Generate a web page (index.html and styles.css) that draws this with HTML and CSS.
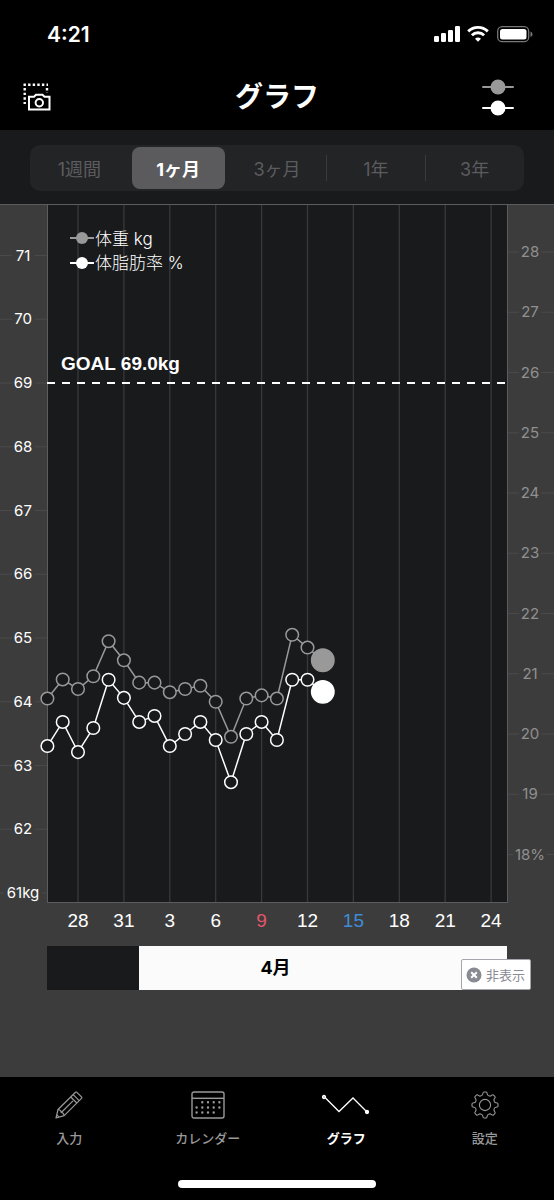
FILE: index.html
```html
<!DOCTYPE html>
<html lang="ja">
<head>
    <meta charset="UTF-8">
    <meta name="viewport" content="width=device-width, initial-scale=1.0">
    <title>グラフ</title>
    <link rel="stylesheet" href="styles.css">
</head>
<body>
    <div class="status-bar">
        <span class="clock">4:21</span>
        <svg class="status-icons" width="100" height="20" viewBox="0 0 100 20" aria-hidden="true">
            <g fill="#fff">
                <rect x="0" y="12" width="5" height="6" rx="1.2"/>
                <rect x="7" y="9" width="5" height="9" rx="1.2"/>
                <rect x="14" y="6" width="5" height="12" rx="1.2"/>
                <rect x="21" y="2" width="5" height="16" rx="1.2"/>
                <path d="M44 17.8l-3-3a4.4 4.4 0 0 1 6 0z"/>
            </g>
            <g fill="none" stroke="#fff" stroke-width="2.9">
                <path d="M34.2 7.4a14 14 0 0 1 19.6 0"/>
                <path d="M37.9 11.3a8.7 8.7 0 0 1 12.2 0"/>
            </g>
            <rect x="63.7" y="2.7" width="31" height="15" rx="4.5" fill="none" stroke="#777" stroke-width="1.3"/>
            <rect x="66" y="5" width="26.5" height="10.5" rx="2.5" fill="#fff"/>
            <path d="M96.500 7.500q2 .7 2 2.700t-2 2.700z" fill="#777"/>
        </svg>
    </div>

    <header class="header">
        <button class="icon-button" aria-label="スクリーンショット">
            <svg width="30" height="30" viewBox="0 0 30 30" fill="none" stroke="#fff">
                <path d="M1.500 2.700H26" stroke-width="2.400" stroke-dasharray="2.400 2.200"/>
                <path d="M2.700 6.100V22M25 6.100V11" stroke-width="2.400" stroke-dasharray="2.400 2.200"/>
                <path d="M7 14.800h5l2-2h6.500l2 2h5v12.700H7z" stroke-width="2"/>
                <circle cx="17.300" cy="20.700" r="3.700" stroke-width="2"/>
            </svg>
        </button>
        <h1>グラフ</h1>
        <button class="icon-button" aria-label="表示項目">
            <svg width="32" height="38" viewBox="0 0 32 38">
                <path d="M1 9h30" stroke="#999" stroke-width="2" stroke-linecap="round"/>
                <circle cx="16" cy="9" r="7.500" fill="#999"/>
                <path d="M1 30h30" stroke="#fff" stroke-width="2" stroke-linecap="round"/>
                <circle cx="16" cy="30" r="7.500" fill="#fff"/>
            </svg>
        </button>
    </header>

    <div class="period">
        <div class="segments">
            <button>1週間</button>
            <button class="selected">1ヶ月</button>
            <button>3ヶ月</button>
            <button class="divided">1年</button>
            <button class="divided">3年</button>
        </div>
    </div>

    <main class="graph">
        <svg class="chart" id="chart" viewBox="0 0 554 742" role="img" aria-label="体重と体脂肪率のグラフ">
            <rect class="plot" x="47" y="0" width="460" height="698"/>
            <g id="grid"></g>
            <path class="frame" d="M0 .5H554M47.500 1V698.500H507.500V1"/>
            <path class="goal" d="M47 179H507"/>
            <text class="goal-label" x="61" y="166">GOAL 69.0kg</text>
            <g id="series"></g>
            <path d="M70 34h24" stroke="#999" stroke-width="2"/>
            <circle cx="82" cy="34" r="6" fill="#999"/>
            <text class="legend" x="95" y="41">体重 kg</text>
            <path d="M70 59h24" stroke="#fff" stroke-width="2"/>
            <circle cx="82" cy="59" r="6" fill="#fff"/>
            <text class="legend" x="95" y="65">体脂肪率 %</text>
        </svg>
        <div class="months">
            <div class="month previous"></div>
            <div class="month current">4月</div>
            <button class="hide-ad">
                <svg width="16" height="16" viewBox="0 0 16 16" aria-hidden="true">
                    <circle cx="8" cy="8" r="7.500" fill="#8a8a93"/>
                    <path d="M5.200 5.200l5.600 5.600M10.800 5.200l-5.600 5.600" stroke="#fff" stroke-width="2"/>
                </svg>
                非表示
            </button>
        </div>
    </main>

    <footer class="footer">
        <nav class="tabs">
            <a href="#input">
                <svg width="28" height="28" viewBox="0 0 28 28" fill="none" stroke="#999" stroke-width="1.2" stroke-linejoin="round">
                    <path d="M1 27l2-8.500L20.500 1.300q.7-.6 1.400 0l4.600 4.600q.7.700 0 1.400L9.200 24.700z"/>
                    <path d="M3 18.500q3.200.6 3.300 3 2.500.1 2.900 3.200M6.300 21.500L18 9.800M15.800 6l6 6M18.200 3.700l6 6M1.800 23.800l2.300 2.300"/>
                </svg>
                入力
            </a>
            <a href="#calendar">
                <svg width="34" height="28" viewBox="0 0 34 28" fill="none" stroke="#999">
                    <rect x="1" y="1" width="32" height="26" rx="2" stroke-width="1.4"/>
                    <path d="M1 7.300h32" stroke-width="1.4"/>
                    <g stroke-width="2.4" stroke-linecap="round" stroke-dasharray="0 5.7">
                        <path d="M11.300 11.300H28.500"/>
                        <path d="M5.600 16.500H28.500"/>
                        <path d="M5.600 21.500H23"/>
                    </g>
                </svg>
                カレンダー
            </a>
            <a href="#graph" class="active">
                <svg width="48" height="28" viewBox="0 0 48 28" fill="none" stroke="#fff" stroke-width="1.3">
                    <path d="M2.500 6L17 20.500 31 7l14 14"/>
                    <circle cx="2" cy="6" r="1.500" fill="#aaa"/>
                    <circle cx="45" cy="21" r="1.500" fill="#fff"/>
                </svg>
                グラフ
            </a>
            <a href="#settings">
                <svg width="28" height="28" viewBox="-14 -14 28 28" fill="none" stroke="#999" stroke-width="1.1">
                    <circle r="5.600"/>
                    <path id="tooth" d="M-3.800-9.200Q-2.300-9.800-2.200-11-2-13-1.200-13H1.200Q2-13 2.200-11 2.300-9.800 3.800-9.200"/>
                    <use href="#tooth" transform="rotate(45)"/>
                    <use href="#tooth" transform="rotate(90)"/>
                    <use href="#tooth" transform="rotate(135)"/>
                    <use href="#tooth" transform="rotate(180)"/>
                    <use href="#tooth" transform="rotate(225)"/>
                    <use href="#tooth" transform="rotate(270)"/>
                    <use href="#tooth" transform="rotate(315)"/>
                </svg>
                設定
            </a>
        </nav>
        <div class="home-indicator"></div>
    </footer>

    <script src="chart.js"></script>
</body>
</html>
```
FILE: styles.css
```css
* {
    box-sizing: border-box;
}
body {
    margin: 0;
    min-height: 100vh;
    display: flex;
    flex-direction: column;
    background-color: #000;
    color: #fff;
    font-family: Inter, "Noto Sans CJK JP", sans-serif;
}
button {
    margin: 0;
    padding: 0;
    border: none;
    background: none;
    color: inherit;
    font-family: inherit;
    cursor: pointer;
}
svg {
    display: block;
}
.status-bar {
    display: flex;
    justify-content: space-between;
    align-items: center;
    height: 68px;
    padding: 0 20px 0 47px;
}
.clock {
    font-size: 21px;
    font-weight: 600;
}
.header {
    display: grid;
    grid-template-columns: 1fr auto 1fr;
    align-items: center;
    height: 62px;
    padding-bottom: 4px;
}
.header h1 {
    margin: 0;
    font-size: 28px;
    line-height: 40px;
    font-weight: 700;
}
.icon-button {
    justify-self: start;
    margin-left: 22px;
}
.icon-button:last-child {
    justify-self: end;
    margin: 0 40px 0 0;
}
.period {
    padding: 15px 30px 13px;
    background-color: #191a1c;
}
.segments {
    display: grid;
    grid-template-columns: repeat(5, 1fr);
    height: 46px;
    padding: 2px 0;
    border-radius: 10px;
    background-color: #232426;
}
.segments button {
    position: relative;
    border-radius: 8px;
    color: #5c5c5f;
    font-size: 18px;
}
.segments .selected {
    margin: 0 3px;
    background-color: #5b5a5d;
    color: #fff;
    font-weight: 700;
}
.segments .divided::before {
    content: "";
    position: absolute;
    left: 0;
    top: 8px;
    bottom: 8px;
    width: 1px;
    background-color: #3a3a3d;
}
.graph {
    flex: 1;
    background-color: #3c3c3c;
}
.chart {
    width: 100%;
    height: auto;
}
.chart text {
    fill: #fff;
}
.plot {
    fill: #191a1c;
}
.frame {
    fill: none;
    stroke: #5c5c5e;
}
.line-x {
    stroke: #38393b;
    stroke-width: 1.3;
}
.line-y {
    stroke: #4a4a4c;
}
.goal {
    stroke: #fff;
    stroke-width: 2;
    stroke-dasharray: 8 7;
}
.chart .goal-label {
    font-family: "Liberation Sans", Arial, sans-serif;
    font-size: 19px;
    font-weight: 700;
}
.legend {
    font-size: 17px;
    font-weight: 300;
}
.scale {
    font-size: 15px;
    text-anchor: middle;
}
.chart .fat-scale {
    fill: #909090;
}
.day {
    font-family: "Liberation Sans", Arial, sans-serif;
    font-size: 19px;
    text-anchor: middle;
}
.chart .sunday {
    fill: #e2566b;
}
.chart .saturday {
    fill: #3f8cd8;
}
.weight {
    stroke: #999;
}
.fat {
    stroke: #fff;
}
.weight, .fat {
    stroke-width: 1.5;
    fill: #191a1c;
}
.series-line {
    fill: none;
}
.weight .latest {
    fill: #999;
}
.fat .latest {
    fill: #fff;
}
.months {
    position: relative;
    display: grid;
    grid-template-columns: 1fr 4fr;
    height: 44px;
    margin: 0 8.5%;
}
.month {
    line-height: 44px;
    font-size: 18px;
    font-weight: 700;
}
.previous {
    background-color: #191a1c;
}
.current {
    padding-left: 33%;
    background-color: #fbfbfb;
    color: #000;
}
.hide-ad {
    position: absolute;
    right: -24px;
    bottom: 0;
    display: flex;
    align-items: center;
    gap: 4px;
    height: 31px;
    padding: 0 5px 0 4px;
    border: 1px solid #a5a5ae;
    border-radius: 2px;
    background-color: #fff;
    color: #8a8a93;
    font-size: 13px;
}
.footer {
    padding: 14px 0 12px;
    background-color: #000;
}
.tabs {
    display: grid;
    grid-template-columns: repeat(4, 1fr);
    height: 89px;
}
.tabs a {
    display: flex;
    flex-direction: column;
    align-items: center;
    gap: 9px;
    color: #999;
    font-size: 13px;
    line-height: 20px;
    font-weight: 500;
    text-decoration: none;
}
.tabs .active {
    color: #fff;
    font-weight: 700;
}
.home-indicator {
    width: 198px;
    height: 8px;
    margin: 0 auto;
    border-radius: 4px;
    background-color: #fff;
}
```
FILE: chart.js
```js
const weights = [64.05, 64.35, 64.2, 64.4, 64.95, 64.65, 64.3, 64.3, 64.15, 64.2,
    64.25, 64.0, 63.45, 64.05, 64.1, 64.05, 65.05, 64.85, 64.65];
const fats = [19.8, 20.2, 19.7, 20.1, 20.9, 20.6, 20.2, 20.3, 19.8, 20.0,
    20.2, 19.9, 19.2, 20.0, 20.2, 19.9, 20.9, 20.9, 20.7];
const days = [28, 31, 3, 6, 9, 12, 15, 18, 21, 24];

const dayX = i => 47.4 + i * 15.3;
const weightY = w => 51.5 + (71 - w) * 63.75;
const fatY = f => 48 + (28 - f) * 60.25;

// Axis lines and labels
let grid = '';
days.forEach((day, n) => {
    const x = dayX(2 + n * 3);
    const type = day === 9 ? 'sunday' : day === 15 ? 'saturday' : '';
    grid += `<path class="line-x" d="M${x} 1V698"/>`;
    grid += `<text class="day ${type}" x="${x}" y="723">${day}</text>`;
});
for (let w = 61; w <= 71; w++) {
    const y = weightY(w);
    grid += w === 61
        ? `<path class="line-y" d="M0 ${y}H4M42 ${y}H47"/>`
        : `<path class="line-y" d="M0 ${y}H12M35 ${y}H47"/>`;
    grid += `<text class="scale" x="23" y="${y + 5}">${w}${w === 61 ? 'kg' : ''}</text>`;
}
for (let f = 18; f <= 28; f++) {
    const y = fatY(f);
    grid += f === 18
        ? `<path class="line-y" d="M508 ${y}H513M547 ${y}H554"/>`
        : `<path class="line-y" d="M508 ${y}H519M541 ${y}H554"/>`;
    grid += `<text class="scale fat-scale" x="530" y="${y + 5}">${f}${f === 18 ? '%' : ''}</text>`;
}
document.getElementById('grid').innerHTML = grid;

// Line with a ring for each day, the latest one filled
function drawSeries(name, values, toY) {
    const points = values.map((v, i) => `${dayX(i)},${toY(v)}`).join(' ');
    const dots = values.map((v, i) => {
        const last = i === values.length - 1;
        return `<circle class="${last ? 'latest' : ''}" cx="${dayX(i)}" cy="${toY(v)}" r="${last ? 11.2 : 6.3}"/>`;
    }).join('');
    return `<g class="${name}"><polyline class="series-line" points="${points}"/>${dots}</g>`;
}
document.getElementById('series').innerHTML =
    drawSeries('weight', weights, weightY) + drawSeries('fat', fats, fatY);
```
